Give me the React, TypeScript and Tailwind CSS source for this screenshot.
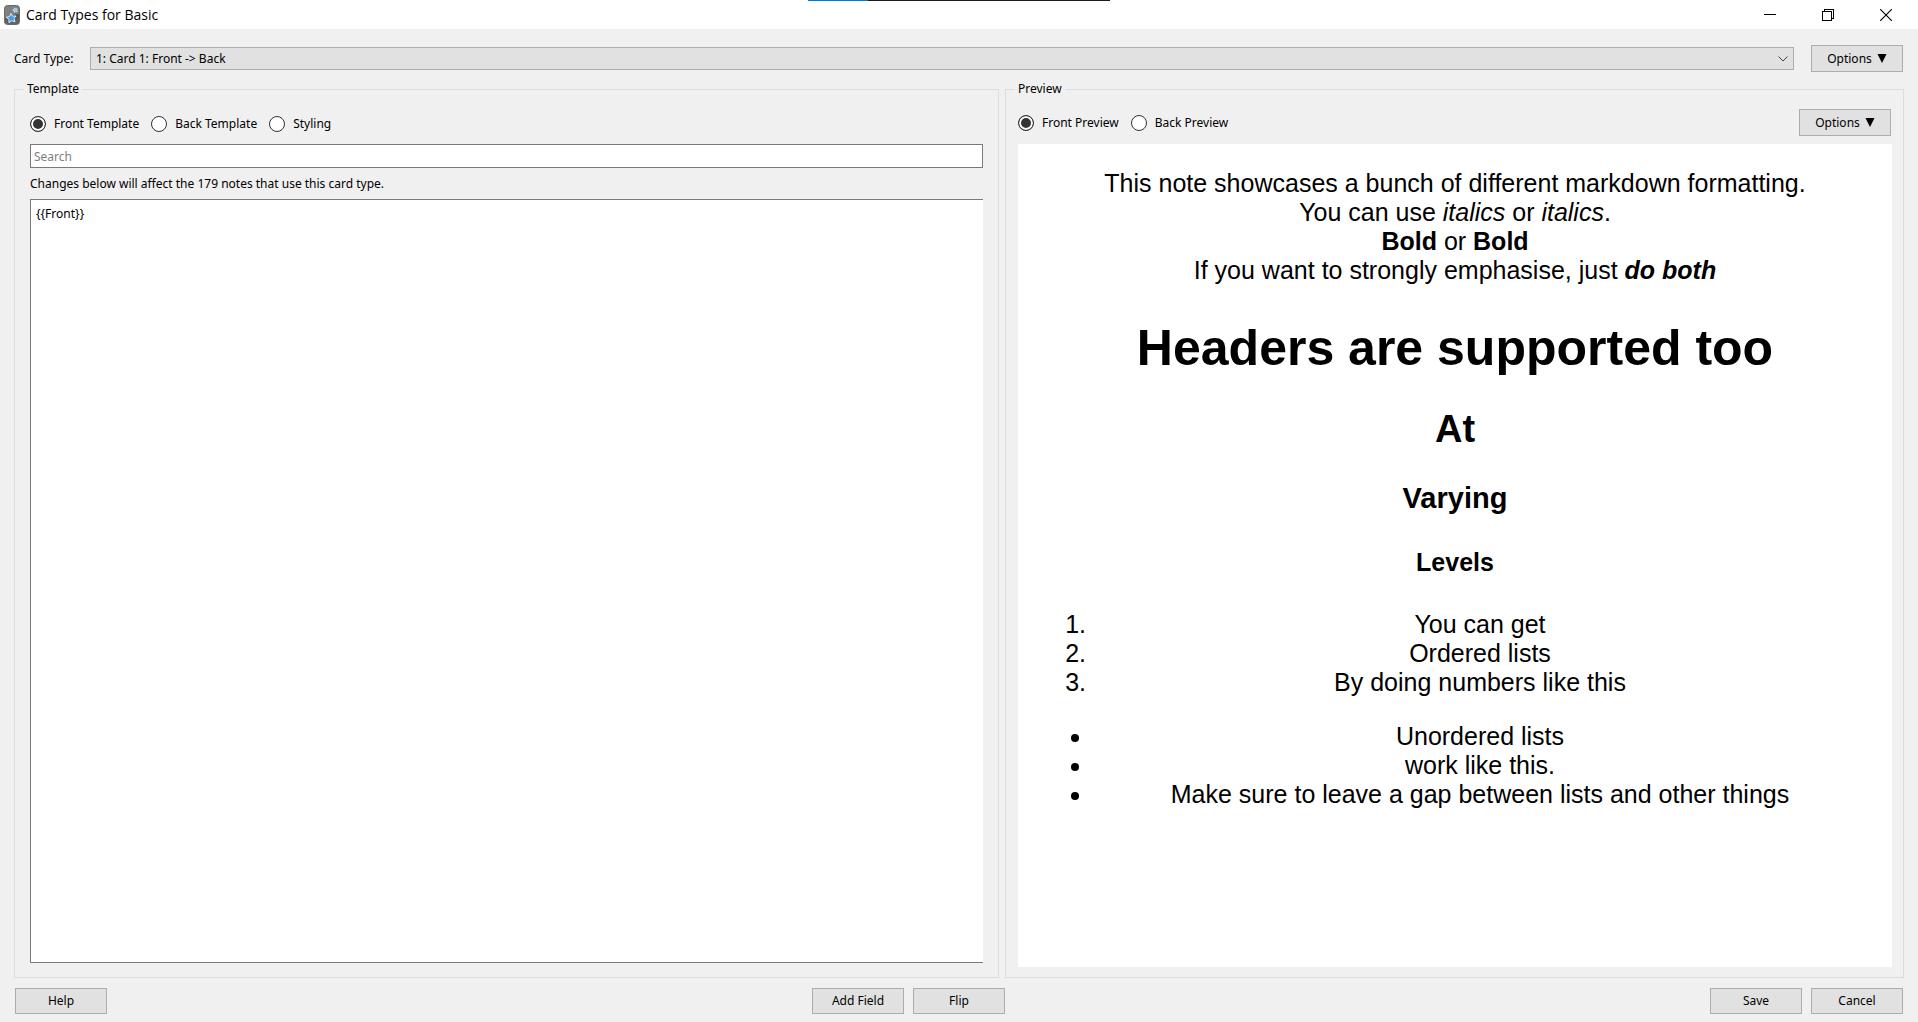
import { useState, type ReactNode } from "react";

function PushButton({ children, height = "h-[26px]" }: { children: ReactNode; height?: string }) {
  return (
    <button
      type="button"
      className={`flex w-[92px] shrink-0 items-center justify-center border border-[#adadad] bg-[#e1e1e1] whitespace-nowrap hover:border-[#0078d7] hover:bg-[#e5f1fb] ${height}`}
    >
      {children}
    </button>
  );
}

function OptionsButton() {
  return (
    <PushButton height="h-[27px]">
      <span className="flex items-center gap-[5px]">
        Options
        <svg width="10" height="9" viewBox="0 0 10 9" aria-hidden="true">
          <path d="M0.5 0H9.5L5 9Z" fill="#000" />
        </svg>
      </span>
    </PushButton>
  );
}

function Radio({
  name,
  label,
  checked,
  onSelect,
}: {
  name: string;
  label: string;
  checked: boolean;
  onSelect: () => void;
}) {
  return (
    <label className="flex items-center gap-2 whitespace-nowrap">
      <input
        type="radio"
        name={name}
        checked={checked}
        onChange={onSelect}
        className="size-4 appearance-none rounded-full border border-[#333] bg-white checked:bg-[#333] checked:shadow-[inset_0_0_0_2px_#fff]"
      />
      {label}
    </label>
  );
}

function RadioGroup({ name, options }: { name: string; options: string[] }) {
  const [value, setValue] = useState(options[0]);
  return (
    <div className="flex items-center gap-3">
      {options.map((o) => (
        <Radio key={o} name={name} label={o} checked={o === value} onSelect={() => setValue(o)} />
      ))}
    </div>
  );
}

function AppIcon() {
  return (
    <svg width="16" height="20" viewBox="0 0 16 20" aria-hidden="true">
      <defs>
        <linearGradient id="deck" x1="0" y1="0" x2="0" y2="1">
          <stop offset="0" stopColor="#777" />
          <stop offset="0.5" stopColor="#555" />
          <stop offset="1" stopColor="#666" />
        </linearGradient>
      </defs>
      <rect x="0.5" y="0.5" width="15" height="19" rx="3" fill="url(#deck)" stroke="#6a6a6a" />
      <path d="M1 3.5Q1 1 3.500 1H12.500Q15 1 15 3.500V9Q8 9 1 13Z" fill="#808080" />
      <path
        d="M7 8.500L8.700 11.200L12 11L10 13.600L11 16.800L7.800 15.700L5 17.700L5 14.300L2.300 12.300L5.600 11.500Z"
        fill="#3d9be9"
        stroke="#d9effd"
        strokeLinejoin="round"
      />
      <path
        d="M10.500 2.800L11.600 4L13.200 3.700L12.500 5.200L13.300 6.700L11.600 6.400L10.400 7.600L10.200 5.900L8.700 5.100L10.200 4.400Z"
        fill="#8fcbf5"
        stroke="#b5daf3"
        strokeLinejoin="round"
      />
    </svg>
  );
}

function TitleBar() {
  const button = "flex h-[29px] w-[58px] items-center justify-center hover:bg-[#e5e5e5]";
  return (
    <header className="relative flex h-[29px] items-center bg-white pl-1">
      <AppIcon />
      <h1 className="ml-1.5 flex-1 font-['Open_Sans',sans-serif] text-sm">Card Types for Basic</h1>
      <div className="absolute top-0 left-1/2 flex h-px w-[302px] -translate-x-1/2 bg-[#1a1a1a]">
        <div className="w-[60px] bg-[#0078d7]" />
      </div>
      <div className="flex pr-[3px]">
        <button type="button" aria-label="Minimize" className={button}>
          <svg width="12" height="12" viewBox="0 0 12 12" shapeRendering="crispEdges">
            <path d="M0 5.500H12" stroke="#000" />
          </svg>
        </button>
        <button type="button" aria-label="Restore" className={button}>
          <svg width="12" height="12" viewBox="0 0 12 12" fill="none" stroke="#000" shapeRendering="crispEdges">
            <path d="M0.500 2.500H9.500V11.500H0.500Z M2.500 2.500V0.500H11.500V9.500H9.500" />
          </svg>
        </button>
        <button type="button" aria-label="Close" className={button}>
          <svg width="12" height="12" viewBox="0 0 12 12" stroke="#000" strokeWidth="1.100">
            <path d="M0 0L12 12M12 0L0 12" />
          </svg>
        </button>
      </div>
    </header>
  );
}

function CardTypeRow() {
  return (
    <div className="flex items-center pr-px">
      <label htmlFor="card-type" className="w-[76px] shrink-0">
        Card Type:
      </label>
      <div className="relative mr-[17px] flex-1">
        <select
          id="card-type"
          className="block h-[23px] w-full appearance-none border border-[#adadad] bg-[#e1e1e1] pl-[5px]"
        >
          <option>1: Card 1: Front -&gt; Back</option>
        </select>
        <svg
          className="pointer-events-none absolute top-[9px] right-[6px]"
          width="10"
          height="6"
          viewBox="0 0 10 6"
          fill="none"
          stroke="#444"
          aria-hidden="true"
        >
          <path d="M0.500 0.500L5 5L9.500 0.500" />
        </svg>
      </div>
      <OptionsButton />
    </div>
  );
}

function TemplatePanel() {
  return (
    <fieldset className="flex min-w-0 flex-col border border-[#dcdcdc] pr-[15px] pb-3.5 pl-[15px]">
      <legend className="-ml-1.5 px-[3px] leading-4">Template</legend>
      <div className="flex h-[47px] items-end pb-3">
        <RadioGroup name="template" options={["Front Template", "Back Template", "Styling"]} />
      </div>
      <input
        type="text"
        aria-label="Search"
        placeholder="Search"
        className="h-6 border border-[#7a7a7a] bg-white px-[3px] placeholder:text-[#808080]"
      />
      <label htmlFor="template-code" className="flex h-[31px] items-center">
        Changes below will affect the 179 notes that use this card type.
      </label>
      <textarea
        id="template-code"
        defaultValue="{{Front}}"
        className="block min-h-40 flex-1 resize-none border border-r-0 border-[#7a7a7a] bg-white px-[5px] py-1.5 outline-none"
      />
    </fieldset>
  );
}

function PreviewPanel() {
  return (
    <fieldset className="flex min-w-0 flex-col border border-[#dcdcdc] pr-[11px] pb-2.5 pl-3">
      <legend className="-ml-[3px] px-[3px] leading-4">Preview</legend>
      <div className="flex h-[47px] items-end justify-between pr-px pb-2">
        <div className="flex h-[27px] items-center">
          <RadioGroup name="preview" options={["Front Preview", "Back Preview"]} />
        </div>
        <OptionsButton />
      </div>
      <article className="flex-1 bg-white p-[25px] text-center font-['Liberation_Sans',Arial,sans-serif] text-[25px] leading-[29px]">
        <p>
          This note showcases a bunch of different markdown formatting.
          <br />
          You can use <em>italics</em> or <em>italics</em>.
          <br />
          <strong>Bold</strong> or <strong>Bold</strong>
          <br />
          If you want to strongly emphasise, just{" "}
          <strong>
            <em>do both</em>
          </strong>
        </p>
        <h1 className="mt-[34px] text-[50px] leading-[58px] font-bold">Headers are supported too</h1>
        <h2 className="mt-[31px] text-[38px] leading-[42px] font-bold">At</h2>
        <h3 className="mt-8 text-[29px] leading-[33px] font-bold">Varying</h3>
        <h4 className="mt-[33px] font-bold">Levels</h4>
        <ol className="mt-[33px] list-decimal pl-[50px]">
          <li>You can get</li>
          <li>Ordered lists</li>
          <li>By doing numbers like this</li>
        </ol>
        <ul className="mt-[25px] list-disc pl-[50px]">
          <li>Unordered lists</li>
          <li>work like this.</li>
          <li>Make sure to leave a gap between lists and other things</li>
        </ul>
      </article>
    </fieldset>
  );
}

export default function App() {
  return (
    <div className="flex min-h-screen flex-col bg-[#f0f0f0] font-['Noto_Sans',sans-serif] text-xs text-black">
      <TitleBar />
      <main className="flex flex-1 flex-col px-3.5 pt-4 pb-2">
        <CardTypeRow />
        <div className="mt-[9px] grid flex-1 grid-cols-[985fr_899fr] gap-1.5">
          <TemplatePanel />
          <PreviewPanel />
        </div>
        <footer className="mt-2.5 flex justify-between px-px">
          <PushButton>Help</PushButton>
          <div className="flex gap-[9px]">
            <PushButton>Add Field</PushButton>
            <PushButton>Flip</PushButton>
          </div>
          <div className="flex gap-[9px]">
            <PushButton>Save</PushButton>
            <PushButton>Cancel</PushButton>
          </div>
        </footer>
      </main>
    </div>
  );
}
